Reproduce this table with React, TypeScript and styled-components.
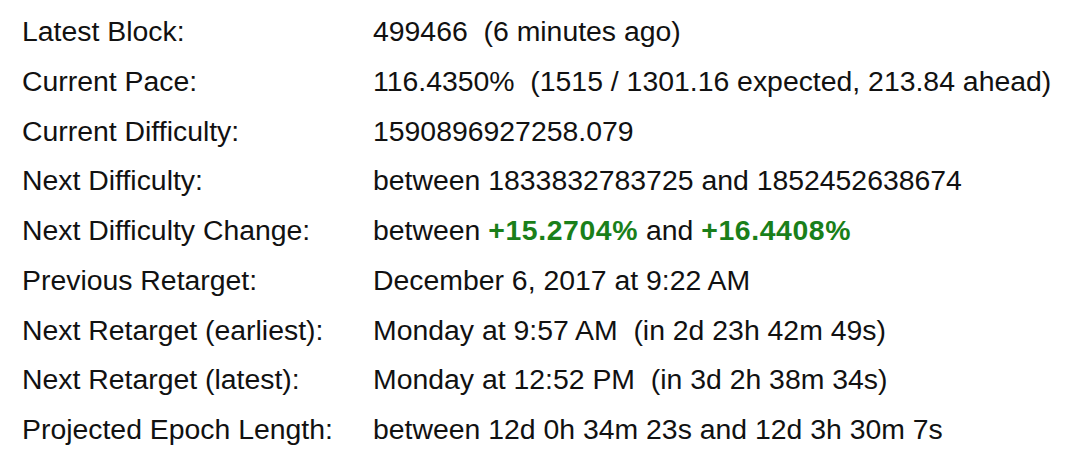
import React from "react";
import styled, { createGlobalStyle } from "styled-components";

const GlobalStyle = createGlobalStyle`
  html, body {
    margin: 0;
    padding: 0;
    background: #ffffff;
  }
  body {
    font-family: "Liberation Sans", Arial, Helvetica, sans-serif;
    color: #111111;
  }
`;

const Table = styled.div`
  display: grid;
  grid-template-columns: 351px 1fr;
  grid-auto-rows: 49.75px;
  padding: 7px 0 0 22px;
  font-size: 28.4px;
  line-height: 49.75px;
  white-space: nowrap;
`;

const Label = styled.div``;

const Value = styled.div``;

const Change = styled.b`
  color: #1a7f1a;
  font-weight: bold;
  letter-spacing: 0.6px;
`;

type Row = { label: string; value: React.ReactNode };

const rows: Row[] = [
  { label: "Latest Block:", value: "499466\u00a0\u00a0(6 minutes ago)" },
  {
    label: "Current Pace:",
    value: "116.4350%\u00a0\u00a0(1515 / 1301.16 expected, 213.84 ahead)",
  },
  { label: "Current Difficulty:", value: "1590896927258.079" },
  { label: "Next Difficulty:", value: "between 1833832783725 and 1852452638674" },
  {
    label: "Next Difficulty Change:",
    value: (
      <>
        between <Change>+15.2704%</Change> and <Change>+16.4408%</Change>
      </>
    ),
  },
  { label: "Previous Retarget:", value: "December 6, 2017 at 9:22 AM" },
  {
    label: "Next Retarget (earliest):",
    value: "Monday at 9:57 AM\u00a0\u00a0(in 2d 23h 42m 49s)",
  },
  {
    label: "Next Retarget (latest):",
    value: "Monday at 12:52 PM\u00a0\u00a0(in 3d 2h 38m 34s)",
  },
  {
    label: "Projected Epoch Length:",
    value: "between 12d 0h 34m 23s and 12d 3h 30m 7s",
  },
];

const App: React.FC = () => {
  return (
    <>
      <GlobalStyle />
      <Table>
        {rows.map((row) => (
          <React.Fragment key={row.label}>
            <Label>{row.label}</Label>
            <Value>{row.value}</Value>
          </React.Fragment>
        ))}
      </Table>
    </>
  );
};

export default App;
